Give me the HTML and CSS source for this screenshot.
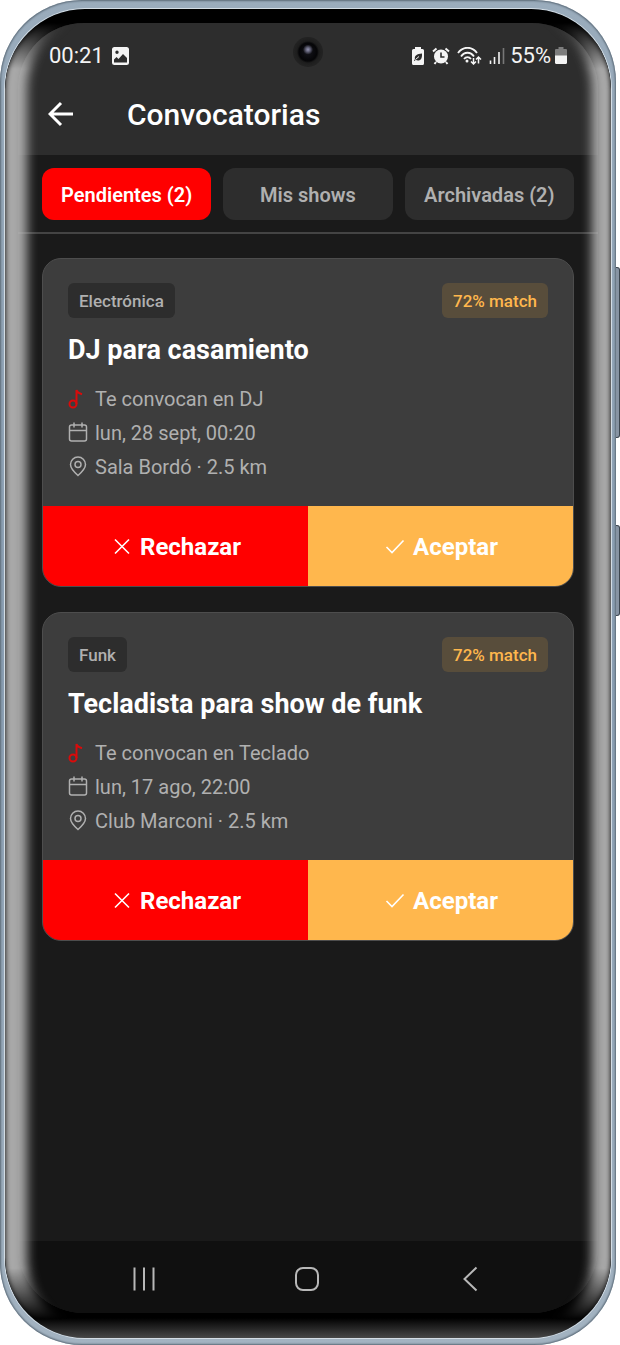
FILE: index.html
```html
<!DOCTYPE html>
<html lang="es">
<head>
  <meta charset="utf-8">
  <title>Convocatorias</title>
  <meta name="viewport" content="width=device-width, initial-scale=1">
  <link rel="stylesheet" href="styles.css">
</head>
<body>

  <svg class="sprite" aria-hidden="true">
    <symbol id="note" viewBox="0 0 20 22">
      <circle cx="5" cy="16" r="3.500" />
      <path d="M8.500 16V2c.6 2.400 2.300 3.300 5.500 4.200" />
    </symbol>
    <symbol id="calendar" viewBox="0 0 20 22">
      <rect x="1.500" y="3" width="17" height="16" rx="2" />
      <path d="M1.500 8.500h17M6 .5v5M14 .5v5" />
    </symbol>
    <symbol id="pin" viewBox="0 0 20 22">
      <path d="M10 19.500C5.500 15.500 2.500 12 2.500 8.500a7.500 7.500 0 0 1 15 0c0 3.500-3 7-7.500 11z" />
      <circle cx="10" cy="8.500" r="3" />
    </symbol>
    <symbol id="cross" viewBox="0 0 20 20">
      <path d="M3 2.500l14 14M17 2.500l-14 14" />
    </symbol>
    <symbol id="check" viewBox="0 0 20 20">
      <path d="M1.500 10l5.500 5.500L18.500 3.500" />
    </symbol>
  </svg>

  <div class="phone">
    <div class="side-button volume"></div>
    <div class="side-button power"></div>
    <div class="bezel">
      <div class="screen">

        <div class="top">
          <div class="status">
            <span>00:21</span>
            <svg width="17" height="18" viewBox="0 0 17 18">
              <path fill="#f4f4f4" fill-rule="evenodd" d="M2.500 0h12A2.500 2.500 0 0 1 17 2.500v13a2.500 2.500 0 0 1-2.500 2.500h-12A2.500 2.500 0 0 1 0 15.500v-13A2.500 2.500 0 0 1 2.500 0zM5 3.500a1.700 1.700 0 1 0 0 3.400a1.700 1.700 0 0 0 0-3.400zM2 15.500h13V11l-4-4-4.500 5L4.500 10 2 12.500z" />
            </svg>
            <div class="status-icons">
              <svg width="14" height="18" viewBox="0 0 14 18">
                <path fill="#f4f4f4" d="M4 0h6v2h1.500A1.500 1.500 0 0 1 13 3.500v13a1.500 1.500 0 0 1-1.500 1.500h-9A1.500 1.500 0 0 1 1 16.500v-13A1.500 1.500 0 0 1 2.500 2H4z" />
                <path fill="#2d2d2d" d="M11 6.500c.3 4.500-1 7-4 7-1 0-1.700-.3-2.200-.7L3.500 14l-.7-.8 1.200-1C3 8.500 6 7 11 6.500z" />
                <path stroke="#f4f4f4" d="M4.500 12.500L8 9.500" />
              </svg>
              <svg width="18" height="18" viewBox="0 0 18 18">
                <circle cx="9" cy="9.500" r="7" fill="#f4f4f4" />
                <path fill="none" stroke="#f4f4f4" stroke-width="2" d="M1 4.500L4.500 1.500M17 4.500L13.500 1.500M4 15l-1.500 2M14 15l1.500 2" />
                <path fill="none" stroke="#2d2d2d" stroke-width="1.600" d="M9 5.500v4.500h3.500" />
              </svg>
              <svg width="25" height="18" viewBox="0 0 25 18">
                <g fill="none" stroke="#f4f4f4" stroke-width="1.800">
                  <path d="M1 6C6-1 15-1 20 6" />
                  <path d="M4 9.500c3.500-5 9.500-5 13 0" />
                  <path d="M7 12c2-2.500 5-2.500 7 0" />
                </g>
                <circle cx="10" cy="14" r="1.500" fill="#f4f4f4" />
                <path fill="none" stroke="#f4f4f4" stroke-width="1.500" d="M16.500 11v6M14 14.500l2.500 2.500 2.500-2.500M21.500 16.500v-6M19 12.500l2.500-2.500 2.500 2.500" />
              </svg>
              <svg width="16" height="18" viewBox="0 0 16 18">
                <path stroke="#f4f4f4" stroke-width="1.600" d="M1.500 13.500v3.500M5.500 10V17M10 5v12" />
                <path stroke="#777" stroke-width="1.600" d="M14.500 1v16" />
              </svg>
              <span class="percent">55%</span>
              <svg width="12" height="17" viewBox="0 0 12 17">
                <path fill="#7d7d7d" d="M3.500 0h5v2H11a1 1 0 0 1 1 1v6H0V3a1 1 0 0 1 1-1h2.500z" />
                <path fill="#f4f4f4" d="M0 8.500h12v7a1.500 1.500 0 0 1-1.500 1.500h-9A1.500 1.500 0 0 1 0 15.500z" />
              </svg>
            </div>
          </div>

          <header class="header">
            <button class="back" type="button" aria-label="Volver">
              <svg width="26" height="26" viewBox="0 0 26 26">
                <path d="M13 2L2 13l11 11M2.500 13H25" />
              </svg>
            </button>
            <h1>Convocatorias</h1>
          </header>
        </div>

        <nav class="tabs">
          <button class="tab active" type="button">Pendientes (2)</button>
          <button class="tab" type="button">Mis shows</button>
          <button class="tab" type="button">Archivadas (2)</button>
        </nav>

        <main class="list">
          <article class="card">
            <div class="card-body">
              <div class="tags">
                <span class="tag">Electrónica</span>
                <span class="tag match">72% match</span>
              </div>
              <h2>DJ para casamiento</h2>
              <ul class="details">
                <li><svg class="icon red"><use href="#note" /></svg>Te convocan en DJ</li>
                <li><svg class="icon"><use href="#calendar" /></svg>lun, 28 sept, 00:20</li>
                <li><svg class="icon"><use href="#pin" /></svg>Sala Bordó · 2.5 km</li>
              </ul>
            </div>
            <div class="actions">
              <button class="reject" type="button"><svg class="action-icon"><use href="#cross" /></svg>Rechazar</button>
              <button class="accept" type="button"><svg class="action-icon"><use href="#check" /></svg>Aceptar</button>
            </div>
          </article>

          <article class="card">
            <div class="card-body">
              <div class="tags">
                <span class="tag">Funk</span>
                <span class="tag match">72% match</span>
              </div>
              <h2>Tecladista para show de funk</h2>
              <ul class="details">
                <li><svg class="icon red"><use href="#note" /></svg>Te convocan en Teclado</li>
                <li><svg class="icon"><use href="#calendar" /></svg>lun, 17 ago, 22:00</li>
                <li><svg class="icon"><use href="#pin" /></svg>Club Marconi · 2.5 km</li>
              </ul>
            </div>
            <div class="actions">
              <button class="reject" type="button"><svg class="action-icon"><use href="#cross" /></svg>Rechazar</button>
              <button class="accept" type="button"><svg class="action-icon"><use href="#check" /></svg>Aceptar</button>
            </div>
          </article>
        </main>

        <div class="system-nav">
          <button type="button" aria-label="Recientes">
            <svg width="26" height="26" viewBox="0 0 26 26"><path d="M3.500 1.500v23M13 1.500v23M22.500 1.500v23" /></svg>
          </button>
          <button type="button" aria-label="Inicio">
            <svg width="26" height="26" viewBox="0 0 26 26"><rect x="2" y="2" width="22" height="22" rx="7" /></svg>
          </button>
          <button type="button" aria-label="Atrás">
            <svg width="26" height="26" viewBox="0 0 26 26"><path d="M19.500 1.500L7.500 13l12 11.500" /></svg>
          </button>
        </div>
      </div>
      <div class="glare"></div>
      <div class="camera"></div>
    </div>
  </div>

</body>
</html>
```

FILE: styles.css
```css
* {
  box-sizing: border-box;
}
body {
  margin: 0;
  background: #fff;
  font-family: Roboto, "Liberation Sans", sans-serif;
  color: #fff;
}
button {
  margin: 0;
  padding: 0;
  border: 0;
  background: none;
  color: inherit;
  font-family: inherit;
}
h1, h2, ul {
  margin: 0;
  padding: 0;
}
.sprite {
  display: none;
}

/* phone frame */
.phone {
  position: relative;
  display: flex;
  min-height: 100vh;
  margin-right: 4px;
  padding: 9px 5px 7px;
  border-radius: 82px;
  background: linear-gradient(#9aacbc, #8b9fb3 50%, #a3b3c1);
  box-shadow: inset 0 0 2px 1px #5b6a77;
}
.side-button {
  position: absolute;
  left: 100%;
  width: 4px;
  border: 1px solid #3c464f;
  border-left: 0;
  border-radius: 0 3px 3px 0;
  background: #8794a3;
}
.volume {
  top: 267px;
  height: 171px;
}
.power {
  top: 525px;
  height: 91px;
}
.bezel {
  position: relative;
  flex: 1;
  display: flex;
  padding: 14px 13px 25px;
  border-radius: 80px;
  overflow: hidden;
  background: linear-gradient(#000, #000 calc(100% - 20px), #484848);
  box-shadow: 0 0 0 1px #d3dde5;
}
.screen {
  flex: 1;
  display: flex;
  flex-direction: column;
  border-radius: 66px;
  overflow: hidden;
  background: #1a1a1a;
}
.glare {
  position: absolute;
  inset: 0;
  pointer-events: none;
  border-radius: 80px;
  box-shadow:
    inset 0 0 4px 1px #333,
    inset 22px 0 11px rgba(182, 182, 182, .92),
    inset -19px 0 11px rgba(182, 182, 182, .92);
  -webkit-mask-image: linear-gradient(transparent 14px, #000 60px, #000 calc(100% - 70px), transparent calc(100% - 18px));
  mask-image: linear-gradient(transparent 14px, #000 60px, #000 calc(100% - 70px), transparent calc(100% - 18px));
}
.camera {
  position: absolute;
  top: 28px;
  left: 50%;
  width: 30px;
  height: 30px;
  margin-left: -15px;
  border-radius: 50%;
  background:
    radial-gradient(circle at 50% 42%, #9696b4 0, #66667c 2px, transparent 5px),
    radial-gradient(circle, #15151c 0, #050507 9px, #1d1d1d 11px, #222 14px);
}

/* status bar and header */
.top {
  background: #2d2d2d;
}
.status {
  display: flex;
  align-items: center;
  gap: 8px;
  height: 50px;
  padding: 15px 31px 0 31px;
  font-size: 22px;
  color: #f4f4f4;
}
.status-icons {
  display: flex;
  align-items: center;
  gap: 7px;
  margin-left: auto;
}
.percent {
  margin: 0 -3px 0 -2px;
}
.header {
  display: flex;
  align-items: center;
  gap: 53px;
  height: 82px;
  padding-left: 30px;
}
.header h1 {
  font-size: 30px;
  font-weight: 500;
}
.back svg {
  display: block;
  fill: none;
  stroke: #fff;
  stroke-width: 3;
}

/* tabs */
.tabs {
  display: flex;
  gap: 12px;
  padding: 13px 24px 12px;
  border-bottom: 2px solid #444;
}
.tab {
  flex: 1;
  height: 52px;
  padding-top: 2px;
  border-radius: 12px;
  background: #2d2d2d;
  color: #b0b0b0;
  font-size: 20px;
  font-weight: 600;
}
.tab.active {
  background: #f00;
  color: #fff;
}

/* cards */
.list {
  flex: 1;
  display: flex;
  flex-direction: column;
  gap: 25px;
  padding: 24px;
}
.card {
  border: 1px solid #4d4d4d;
  border-radius: 19px;
  overflow: hidden;
  background: #3d3d3d;
}
.card-body {
  padding: 24px 25px 22px;
}
.tags {
  display: flex;
  justify-content: space-between;
}
.tag {
  padding: 1px 11px 0;
  border-radius: 6px;
  background: #2d2d2d;
  color: #b0b0b0;
  font-size: 17px;
  font-weight: 500;
  line-height: 34px;
}
.tag.match {
  background: #584d3b;
  color: #ffb74d;
}
.card h2 {
  margin: 16px 0;
  font-size: 27px;
  font-weight: 700;
  line-height: 32px;
}
.details {
  list-style: none;
  color: #b0b0b0;
  font-size: 20px;
  line-height: 34px;
}
.details li {
  display: flex;
  align-items: center;
  gap: 7px;
}
.icon {
  width: 20px;
  height: 22px;
  fill: none;
  stroke: #b0b0b0;
  stroke-width: 1.5;
}
.icon.red {
  stroke: #d90b0b;
  stroke-width: 2;
}
.actions {
  display: flex;
}
.actions button {
  flex: 1;
  display: flex;
  align-items: center;
  justify-content: center;
  gap: 8px;
  height: 80px;
  padding: 2px 0 0 2px;
  font-size: 24px;
  font-weight: 700;
}
.reject {
  background: #f00;
}
.accept {
  background: #ffb74d;
}
.action-icon {
  width: 20px;
  height: 20px;
  fill: none;
  stroke: #fff;
  stroke-width: 1.6;
}

/* android navigation bar */
.system-nav {
  display: flex;
  height: 72px;
  padding: 3px 47px 0 45px;
  background: #101010;
}
.system-nav button {
  flex: 1;
}
.system-nav svg {
  fill: none;
  stroke: #b8b8b8;
  stroke-width: 2;
  vertical-align: middle;
}
```
